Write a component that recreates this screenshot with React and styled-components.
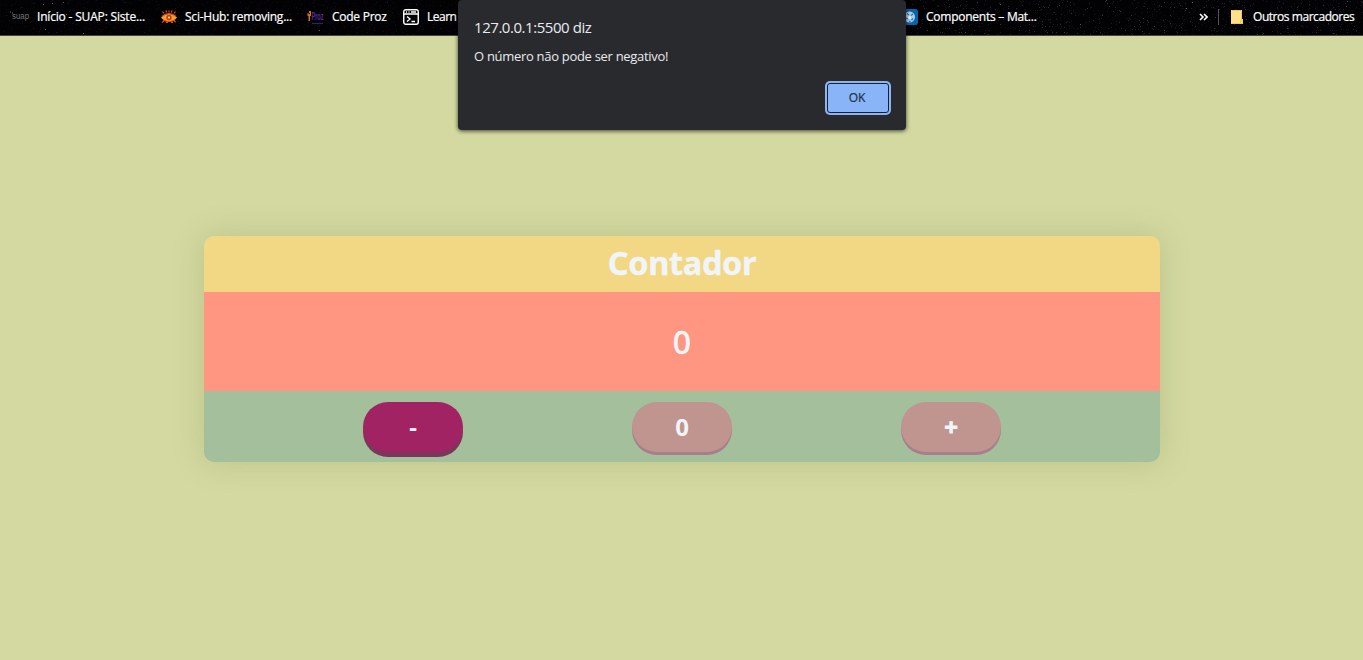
import React from 'react';
import styled, { createGlobalStyle } from 'styled-components';

const GlobalStyle = createGlobalStyle`
  * { box-sizing: border-box; }
  body {
    margin: 0;
    background: #d3d9a0;
    font-family: 'Open Sans', 'Noto Sans', sans-serif;
    overflow: hidden;
  }
`;

const Page = styled.div`
  position: relative;
  height: 660px;
  display: flex;
  flex-direction: column;
`;

const BookmarkBar = styled.nav`
  position: relative;
  flex: none;
  height: 36px;
  padding: 0 8px 2px;
  display: flex;
  align-items: center;
  background: #020204;
  border-bottom: 1px solid #45463c;
  color: #fff;
`;

const Sky = styled.svg`
  position: absolute;
  inset: 0;
`;

const Bookmark = styled.div`
  position: relative;
  flex: none;
  width: ${(p) => p.$width}px;
  margin-left: ${(p) => p.$before || 0}px;
  display: flex;
  align-items: center;
  gap: ${(p) => p.$gap || 7}px;
  svg { flex: none; display: block; overflow: visible; }
`;

const Label = styled.span`
  font-size: 12px;
  line-height: 16px;
  white-space: nowrap;
  letter-spacing: ${(p) => p.$spacing || 0}px;
  -webkit-text-stroke: 0.2px currentColor;
`;

const BarEnd = styled.div`
  position: relative;
  margin-left: auto;
  display: flex;
  align-items: center;
`;

const Divider = styled.span`
  width: 1px;
  height: 16px;
  margin: 0 12px 0 10px;
  background: #55565a;
`;

const Main = styled.main`
  flex: 1;
  padding-top: 200px;
`;

const Card = styled.section`
  width: 956px;
  margin-left: 204px;
  border-radius: 10px;
  overflow: hidden;
  box-shadow: 0 0 30px rgba(120, 130, 70, 0.25);
  color: #f1f5f8;
`;

const CardTitle = styled.h1`
  height: 56px;
  margin: 0;
  background: #f2d785;
  font: 700 32.5px/54px 'Noto Sans', sans-serif;
  text-align: center;
  letter-spacing: -0.35px;
  -webkit-text-stroke: 0.4px currentColor;
`;

const Display = styled.div`
  height: 99px;
  background: #ff9682;
  font: 500 32px/99px 'Noto Sans', sans-serif;
  text-align: center;
  -webkit-text-stroke: 0.3px currentColor;
`;

const Controls = styled.div`
  height: 71px;
  padding: 11px 159px 0;
  display: flex;
  justify-content: space-between;
  background: #a3bf9b;
`;

const CounterButton = styled.button`
  width: 100px;
  height: 50px;
  padding: 0;
  border: 0;
  border-radius: 25px;
  color: #f1f5f8;
  font: 700 24px/50px 'Noto Sans', sans-serif;
  -webkit-text-stroke: ${(p) => p.$stroke || 0}px currentColor;
  background: ${(p) => (p.$active ? '#a22363' : '#c0948f')};
  box-shadow: ${(p) => (p.$active ? '0 5px 0 #7b3659' : '0 3px 0 #a67f8a')};
`;

const Dialog = styled.div`
  position: absolute;
  top: 0;
  left: 458px;
  width: 448px;
  height: 130px;
  padding: 17px 16px 16px;
  display: flex;
  flex-direction: column;
  border-radius: 4px;
  background: #292a2d;
  color: #e8eaed;
  box-shadow: 0 1px 4px rgba(0, 0, 0, 0.7);
`;

const DialogTitle = styled.div`
  font-size: 15px;
  line-height: 20px;
  letter-spacing: -0.45px;
`;

const DialogText = styled.div`
  margin-top: 10px;
  font-size: 13px;
  line-height: 18px;
  letter-spacing: -0.3px;
`;

const OkButton = styled.button`
  align-self: flex-end;
  width: 62px;
  height: 30px;
  margin: 18px 1px 0 0;
  padding: 0 2px 0 0;
  border: 1px solid #202124;
  border-radius: 3px;
  background: #8ab4f8;
  color: #202f48;
  font: 12px/28px 'Open Sans', sans-serif;
  -webkit-text-stroke: 0.2px currentColor;
  box-shadow: 0 0 0 2px #8ab4f8;
`;

// Small deterministic generator so the star field is stable between renders.
function makeStars(count) {
  let seed = 97;
  const next = () => {
    seed = (seed * 16807) % 2147483647;
    return seed / 2147483647;
  };
  return Array.from({ length: count }, () => {
    const x = Math.floor(next() * 1363);
    const y = Math.floor(next() * 35);
    const dense = x > 900;
    return { x, y, o: next() * next() * (dense ? 0.34 : 0.14) };
  });
}
const stars = makeStars(4800);
const brightStars = [[52, 3], [43, 4], [45, 29], [63, 2], [83, 33], [319, 30], [66, 14], [1186, 8], [1192, 2], [1080, 24], [1000, 4]];

const StarField = () => (
  <Sky width="1363" height="35" shapeRendering="crispEdges">
    {stars.map((s, i) => (
      <rect key={i} x={s.x} y={s.y} width="1" height="1" fill="#b3a9cc" opacity={s.o} />
    ))}
    {brightStars.map(([x, y]) => (
      <rect key={`${x}-${y}`} x={x} y={y} width="1" height="1" fill="#999" opacity=".6" />
    ))}
  </Sky>
);

const SuapIcon = () => (
  <svg width="22" height="16" viewBox="0 0 22 16">
    <path d="M2 3h1M4 4h1" stroke="#777" />
    <text x="4" y="9.500" fontFamily="Liberation Sans" fontSize="8.500" textLength="17" lengthAdjust="spacingAndGlyphs" fill="#77777c">suap</text>
  </svg>
);

const EyeIcon = () => (
  <svg width="16" height="16" viewBox="0 0 16 16">
    <path d="M3 4.500 1.500 2.500M5.500 3.500 5 1.500M8 3.500v-2M10.500 3.500l.5-2M13 4.500l1.500-2M3 12l-2 1.500M7 13.500H5M10 13.500h2M13 12l2 1" stroke="#dc4b1b" strokeWidth="1.200" />
    <path d="M0 8.500Q3 5 8 5t8 3.500q-3 4-8 4t-8-4Z" fill="#f3a02c" />
    <path d="M1 7.500Q4 4.500 8 4.500t7 3M2 11q6 3 12 0" fill="none" stroke="#dd4f20" strokeWidth="1.200" />
    <circle cx="8" cy="8.500" r="2.700" fill="#c83b18" />
    <circle cx="8" cy="8.500" r="1.100" fill="#ffe36a" />
  </svg>
);

const ProzIcon = () => (
  <svg width="17" height="16" viewBox="0 0 17 16">
    <path d="M.5 4h1v3h-1zM2 2h2v2H2zM1.500 5H3v7H1.500zM3 4h1v3H3z" fill="#d9700f" />
    <text x="4.500" y="11" fontFamily="Liberation Sans" fontWeight="700" fontSize="10" textLength="12" lengthAdjust="spacingAndGlyphs" fill="#553099">Proz</text>
    <path d="M5 14.500h11" stroke="#35206b" strokeWidth="1.200" />
  </svg>
);

const TerminalIcon = () => (
  <svg width="16" height="16" viewBox="0 0 16 16" fill="none" stroke="#fff" strokeWidth="1.400">
    <rect x=".75" y=".75" width="14.500" height="14.500" rx="2" />
    <path d="M1 5h14M3 3h1M5.500 3h1M8 3h5M4 7.500 7 10l-3 2.500M8.500 12.500h3.500" />
  </svg>
);

const ComponentsIcon = () => (
  <svg width="16" height="16" viewBox="0 0 16 16">
    <rect width="16" height="16" rx="3" fill="#0864a8" />
    <circle cx="7.500" cy="8" r="5.500" fill="#a9cde9" />
    <path d="M5 4.500 7 6M11 5 9 6.500M4 9l2 1M11 9.500 9.500 11M7 12.500h1.500" stroke="#2773ac" strokeWidth="1.300" fill="none" />
    <circle cx="7.500" cy="8.500" r="1.500" fill="#e5f4ff" />
  </svg>
);

const FolderIcon = () => (
  <svg width="12" height="14" viewBox="0 0 12 14">
    <path d="M0 0h11v9h1v5H0Z" fill="#ffe08a" />
    <path d="M.5.5h10v9M9.500 13V10h2v3.500H.5" stroke="#f0c95c" fill="none" />
  </svg>
);

const MoreIcon = () => (
  <svg width="9" height="8" viewBox="0 0 9 8" fill="none" stroke="#fff" strokeWidth="1.600">
    <path d="m1 1 3 3-3 3M5 1l3 3-3 3" />
  </svg>
);

export default function App() {
  return (
    <Page>
      <GlobalStyle />
      <BookmarkBar>
        <StarField />
        <Bookmark $width={153}><SuapIcon /><Label $spacing={-0.18}>Início - SUAP: Siste...</Label></Bookmark>
        <Bookmark $width={146} $gap={8}><EyeIcon /><Label $spacing={-0.22}>Sci-Hub: removing...</Label></Bookmark>
        <Bookmark $width={96} $gap={8}><ProzIcon /><Label $spacing={-0.25}>Code Proz</Label></Bookmark>
        <Bookmark $width={90} $gap={8}><TerminalIcon /><Label $spacing={-0.5}>Learn</Label></Bookmark>
        <Bookmark $width={160} $before={409} $gap={8}><ComponentsIcon /><Label $spacing={-0.25}>Components – Mat...</Label></Bookmark>
        <BarEnd>
          <MoreIcon />
          <Divider />
          <Bookmark $width={124} $gap={10}><FolderIcon /><Label $spacing={-0.45}>Outros marcadores</Label></Bookmark>
        </BarEnd>
      </BookmarkBar>
      <Main>
        <Card>
          <CardTitle>Contador</CardTitle>
          <Display>0</Display>
          <Controls>
            <CounterButton $active>-</CounterButton>
            <CounterButton>0</CounterButton>
            <CounterButton $stroke={0.8}>+</CounterButton>
          </Controls>
        </Card>
      </Main>
      <Dialog role="alertdialog">
        <DialogTitle>127.0.0.1:5500 diz</DialogTitle>
        <DialogText>O número não pode ser negativo!</DialogText>
        <OkButton>OK</OkButton>
      </Dialog>
    </Page>
  );
}
